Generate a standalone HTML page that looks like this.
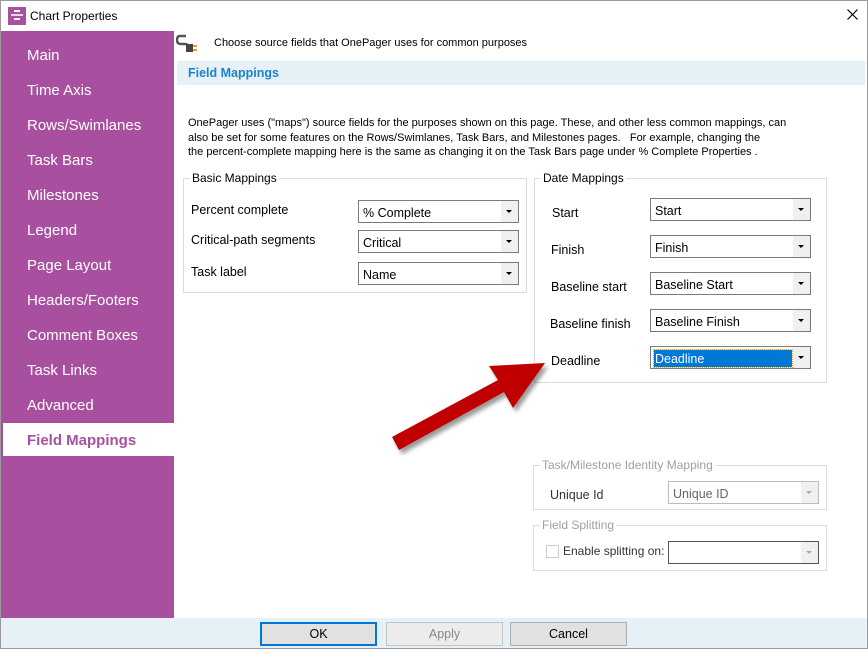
<!DOCTYPE html>
<html><head><meta charset="utf-8"><style>
*{box-sizing:border-box;margin:0;padding:0}
body{width:868px;height:649px;position:relative;background:#fff;font-family:"Liberation Sans",Arial,sans-serif;font-size:12px;color:#000;overflow:hidden}
.a{position:absolute}
.nav{position:absolute;left:27px;color:#fff;font-size:15px}
.grp{position:absolute;border:1px solid #dcdcdc}
.gt{position:absolute;top:-8px;left:6px;background:#fff;padding:0 2px;font-size:12px}
.cb{position:absolute;height:23px;border:1px solid #7a7a7a;background:#fff;font-size:12.5px;padding:5px 0 0 4px}
.cb:after{content:"";position:absolute;right:0;top:0;width:17px;height:21px;background:#f0f0f0}
.cb i{position:absolute;right:6px;top:9px;width:0;height:0;border-left:3px solid transparent;border-right:3px solid transparent;border-top:3px solid #000;z-index:2}
.lb{position:absolute;font-size:12.5px}
.btn{position:absolute;top:622px;height:24px;width:117px;background:#e1e1e1;border:1px solid #adadad;text-align:center;padding-top:4px;font-size:12.5px}
</style></head><body>
<div class="a" style="left:0;top:0;width:868px;height:649px;border:1px solid #9a9a9a"></div>
<svg class="a" style="left:8px;top:7px" width="18" height="18"><rect width="18" height="18" fill="#a8509f"/><rect x="6" y="3" width="6" height="2" fill="#fff"/><rect x="3" y="7" width="12" height="2" fill="#f0d0ec"/><rect x="6" y="11" width="6" height="2" fill="#fff"/></svg>
<div class="a" style="left:30px;top:9px;font-size:12px">Chart Properties</div>
<svg class="a" style="left:847px;top:9px" width="11" height="11"><path d="M0.5 0.5 L10.5 10.5 M10.5 0.5 L0.5 10.5" stroke="#000" stroke-width="1.2"/></svg>
<div class="a" style="left:1px;top:31px;width:173px;height:587px;background:#a8509f"></div>
<div class="nav" style="top:47px">Main</div>
<div class="nav" style="top:82px">Time Axis</div>
<div class="nav" style="top:117px">Rows/Swimlanes</div>
<div class="nav" style="top:152px">Task Bars</div>
<div class="nav" style="top:187px">Milestones</div>
<div class="nav" style="top:222px">Legend</div>
<div class="nav" style="top:257px">Page Layout</div>
<div class="nav" style="top:292px">Headers/Footers</div>
<div class="nav" style="top:327px">Comment Boxes</div>
<div class="nav" style="top:362px">Task Links</div>
<div class="nav" style="top:397px">Advanced</div>
<div class="a" style="left:3px;top:423px;width:171px;height:33px;background:#fff"></div>
<div class="nav" style="top:432px;color:#a8509f;font-weight:bold">Field Mappings</div>
<svg class="a" style="left:176px;top:33px" width="24" height="20"><path d="M10 3 H4 Q1 3 1 7 Q1 11 5 11 H9 Q12 11 12 14" stroke="#555" stroke-width="2.5" fill="none"/><rect x="10" y="11" width="7" height="8" fill="#444"/><rect x="17" y="12" width="4" height="2" fill="#e8a020"/><rect x="17" y="16" width="4" height="2" fill="#e8a020"/></svg>
<div class="a" style="left:214px;top:37px;font-size:11px">Choose source fields that OnePager uses for common purposes</div>
<div class="a" style="left:177px;top:61px;width:688px;height:24px;background:#e5f1f7"></div>
<div class="a" style="left:188px;top:66px;font-size:12.5px;font-weight:bold;color:#1e82c8">Field Mappings</div>
<div class="a" style="left:188px;top:116px;width:660px;font-size:11px;line-height:14.5px;white-space:nowrap">OnePager uses ("maps") source fields for the purposes shown on this page. These, and other less common mappings, can<br>also be set for some features on the Rows/Swimlanes, Task Bars, and Milestones pages.&nbsp;&nbsp; For example, changing the<br>the percent-complete mapping here is the same as changing it on the Task Bars page under % Complete Properties .</div>
<div class="grp" style="left:183px;top:178px;width:344px;height:115px"><div class="gt">Basic Mappings</div></div>
<div class="lb" style="left:191px;top:203px">Percent complete</div>
<div class="lb" style="left:191px;top:233px">Critical-path segments</div>
<div class="lb" style="left:191px;top:265px">Task label</div>
<div class="cb" style="left:358px;top:200px;width:161px">% Complete<i></i></div>
<div class="cb" style="left:358px;top:230px;width:161px">Critical<i></i></div>
<div class="cb" style="left:358px;top:262px;width:161px">Name<i></i></div>
<div class="grp" style="left:534px;top:178px;width:293px;height:205px"><div class="gt">Date Mappings</div></div>
<div class="lb" style="left:552px;top:206px">Start</div>
<div class="lb" style="left:551px;top:243px">Finish</div>
<div class="lb" style="left:551px;top:280px">Baseline start</div>
<div class="lb" style="left:550px;top:317px">Baseline finish</div>
<div class="lb" style="left:551px;top:354px">Deadline</div>
<div class="cb" style="left:650px;top:198px;width:161px">Start<i></i></div>
<div class="cb" style="left:650px;top:235px;width:161px">Finish<i></i></div>
<div class="cb" style="left:650px;top:272px;width:161px">Baseline Start<i></i></div>
<div class="cb" style="left:650px;top:309px;width:161px">Baseline Finish<i></i></div>
<div class="cb" style="left:650px;top:346px;width:161px;padding:3px 0 0 3px"><span style="display:block;width:138px;height:17px;background:#0078d7;color:#fff;outline:1px dotted #e0a040;padding:2px 0 0 1px">Deadline</span><i></i></div>
<div class="grp" style="left:533px;top:465px;width:294px;height:45px"><div class="gt" style="color:#a0a0a0">Task/Milestone Identity Mapping</div></div>
<div class="lb" style="left:550px;top:488px;color:#333">Unique Id</div>
<div class="cb" style="left:668px;top:481px;width:151px;border-color:#bcbcbc;color:#666">Unique ID<i style="border-top-color:#aaa"></i></div>
<div class="grp" style="left:533px;top:525px;width:294px;height:46px"><div class="gt" style="color:#a0a0a0">Field Splitting</div></div>
<div class="a" style="left:546px;top:545px;width:13px;height:13px;border:1px solid #ccc"></div>
<div class="lb" style="left:563px;top:544px;color:#333;font-size:12px">Enable splitting on:</div>
<div class="cb" style="left:668px;top:541px;width:151px;border-color:#555"><i style="border-top-color:#aaa"></i></div>
<svg class="a" style="left:0;top:0" width="868" height="649"><defs><filter id="s"><feDropShadow dx="3" dy="4" stdDeviation="2" flood-opacity="0.4"/></filter></defs><polygon filter="url(#s)" fill="#c00000" points="392,437 498,380 489,366 545,363 513,408 504,392 399,450"/></svg>
<div class="a" style="left:1px;top:618px;width:866px;height:30px;background:#e5f1f7"></div>
<div class="btn" style="left:260px;border:2px solid #0078d7;padding-top:3px">OK</div>
<div class="btn" style="left:386px;color:#888;border-color:#c4c4c4;background:#ececec">Apply</div>
<div class="btn" style="left:510px">Cancel</div>
</body></html>
